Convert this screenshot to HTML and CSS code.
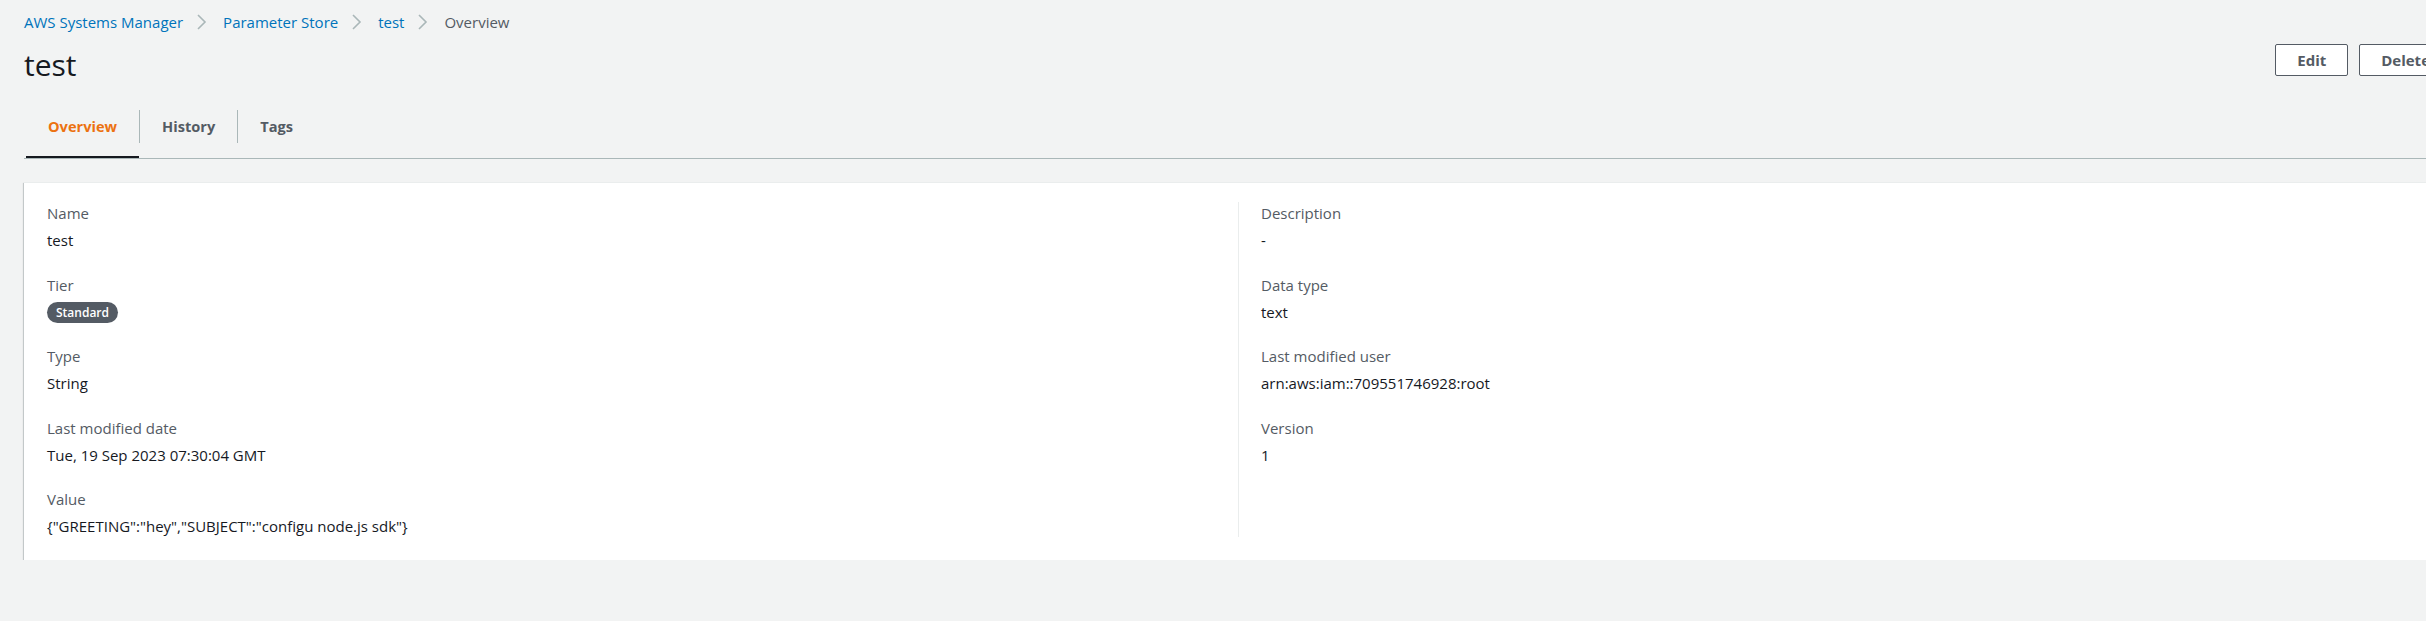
FILE: index.html
```html
<!DOCTYPE html>
<html lang="en">
<head>
<meta charset="utf-8">
<title>test - Parameter Store</title>
<link rel="stylesheet" href="styles.css">
</head>
<body>
<div class="page">
  <nav class="breadcrumbs" aria-label="Breadcrumbs">
    <a class="crumb" href="#">AWS Systems Manager</a>
    <svg class="chevron" viewBox="0 0 16 16" aria-hidden="true"><path d="M5 1l7 7-7 7"/></svg>
    <a class="crumb" href="#">Parameter Store</a>
    <svg class="chevron" viewBox="0 0 16 16" aria-hidden="true"><path d="M5 1l7 7-7 7"/></svg>
    <a class="crumb" href="#">test</a>
    <svg class="chevron" viewBox="0 0 16 16" aria-hidden="true"><path d="M5 1l7 7-7 7"/></svg>
    <span class="crumb crumb-current">Overview</span>
  </nav>

  <header class="title-row">
    <h1 class="title">test</h1>
    <div class="actions">
      <button class="btn">Edit</button>
      <button class="btn">Delete</button>
    </div>
  </header>

  <div class="tabs">
    <div class="tab tab-active"><span class="tab-label tab-first">Overview</span></div>
    <div class="tab"><span class="tab-label">History</span></div>
    <div class="tab"><span class="tab-label">Tags</span></div>
  </div>

  <section class="card">
    <div class="columns">
      <div class="column">
        <div class="field">
          <div class="label">Name</div>
          <div class="value">test</div>
        </div>
        <div class="field">
          <div class="label">Tier</div>
          <div class="value"><span class="badge">Standard</span></div>
        </div>
        <div class="field">
          <div class="label">Type</div>
          <div class="value">String</div>
        </div>
        <div class="field">
          <div class="label">Last modified date</div>
          <div class="value">Tue, 19 Sep 2023 07:30:04 GMT</div>
        </div>
        <div class="field">
          <div class="label">Value</div>
          <div class="value">{"GREETING":"hey","SUBJECT":"configu node.js sdk"}</div>
        </div>
      </div>
      <div class="column column-right">
        <div class="field">
          <div class="label">Description</div>
          <div class="value">-</div>
        </div>
        <div class="field">
          <div class="label">Data type</div>
          <div class="value">text</div>
        </div>
        <div class="field">
          <div class="label">Last modified user</div>
          <div class="value">arn:aws:iam::709551746928:root</div>
        </div>
        <div class="field">
          <div class="label">Version</div>
          <div class="value">1</div>
        </div>
      </div>
    </div>
  </section>
</div>
</body>
</html>
```
FILE: styles.css
```css
html, body {
  margin: 0;
  padding: 0;
  overflow: hidden;
  background: #f2f3f3;
}

body {
  font-family: "Open Sans", "Noto Sans", sans-serif;
  font-size: 15px;
  line-height: 22px;
  color: #16191f;
}

.page {
  width: 2428px;
  padding: 11px 0 0 24px;
}

/* Breadcrumbs */
.breadcrumbs {
  display: flex;
  align-items: center;
  height: 22px;
}

.crumb {
  color: #0073bb;
  text-decoration: none;
}

.crumb-current {
  color: #545b64;
}

.chevron {
  width: 16px;
  height: 16px;
  margin: 0 14px 0 10px;
  fill: none;
  stroke: #aab7b8;
  stroke-width: 1.6;
}

/* Title row */
.title-row {
  display: flex;
  justify-content: space-between;
  align-items: flex-start;
  margin-top: 11px;
}

.title {
  margin: 0;
  font-size: 30px;
  line-height: 42px;
  font-weight: 400;
  color: #16191f;
}

.actions {
  display: flex;
  gap: 11px;
}

.btn {
  height: 32px;
  padding: 0 21px;
  border: 1px solid #545b64;
  border-radius: 2px;
  background: #ffffff;
  color: #545b64;
  font-family: inherit;
  font-size: 15px;
  font-weight: 700;
  line-height: 22px;
}

/* Tabs */
.tabs {
  display: flex;
  margin-top: 24px;
  padding-left: 2px;
  border-bottom: 1px solid #aab7b8;
}

.tab {
  padding-bottom: 15px;
  font-size: 14.6px;
  font-weight: 700;
  color: #545b64;
}

.tab-active {
  color: #ec7211;
  box-shadow: inset 0 -2px 0 #16191f;
}

.tab-label {
  display: block;
  padding: 5px 22px 6px;
  border-left: 1px solid #aab7b8;
}

.tab-first {
  border-left-color: transparent;
  padding-left: 21px;
}

/* Card */
.card {
  margin-top: 23px;
  background: #ffffff;
  border-top: 1px solid #eaeded;
  box-shadow: 0 1px 1px 0 rgba(0, 28, 36, 0.3),
              1px 1px 1px 0 rgba(0, 28, 36, 0.15),
              -1px 1px 1px 0 rgba(0, 28, 36, 0.15);
  padding: 19px 23px 23px;
}

.columns {
  display: grid;
  grid-template-columns: 1fr 1fr;
}

.column {
  display: flex;
  flex-direction: column;
  gap: 22.5px;
}

.column-right {
  border-left: 1px solid #eaeded;
  padding-left: 22px;
}

.label {
  color: #545b64;
}

.value {
  margin-top: 5px;
  color: #16191f;
}

.badge {
  display: inline-block;
  vertical-align: top;
  margin-top: 1px;
  height: 21px;
  padding: 0 9px;
  border-radius: 11px;
  background: #545b64;
  color: #ffffff;
  font-size: 12px;
  font-weight: 600;
  line-height: 21px;
}
```
